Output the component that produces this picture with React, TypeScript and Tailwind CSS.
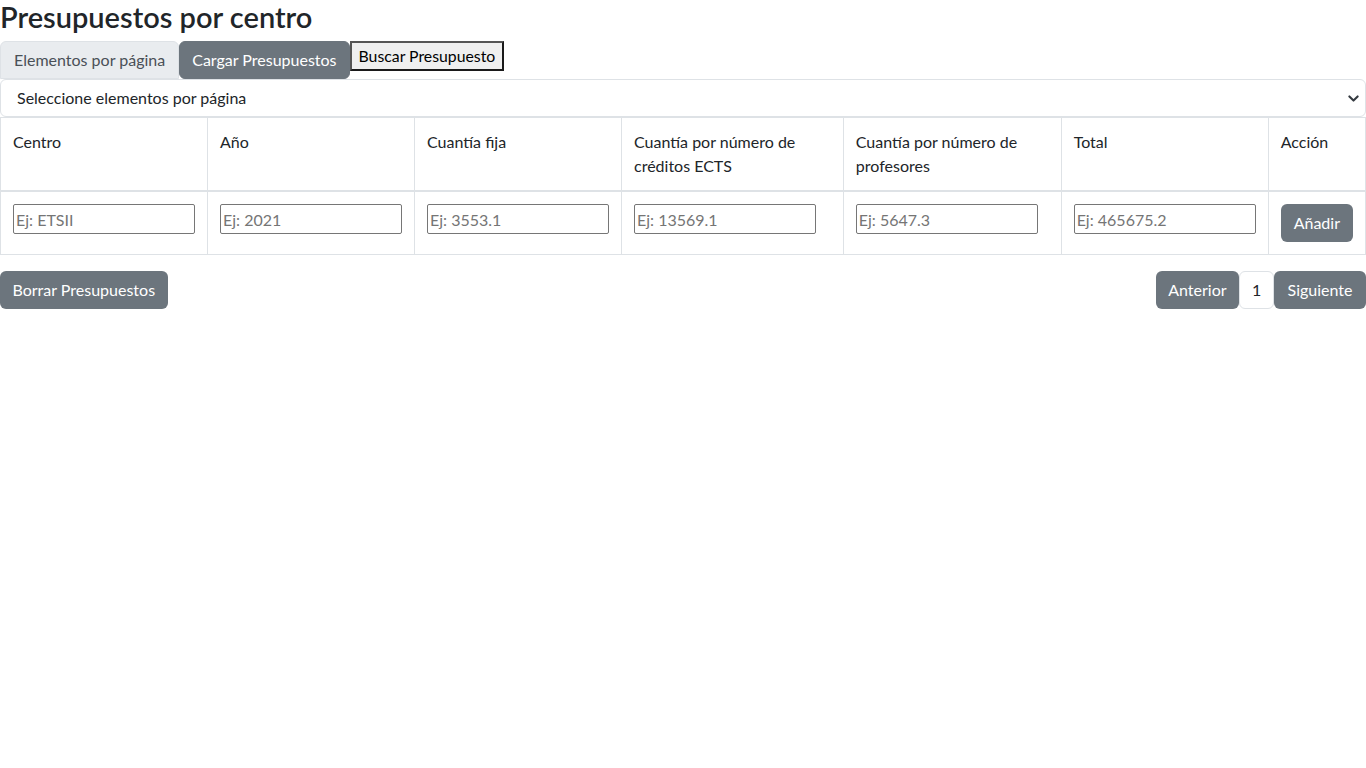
import React from "react";

const cols = [
  { label: "Centro", w: "w-[207px]", ph: "Ej: ETSII" },
  { label: "Año", w: "w-[207px]", ph: "Ej: 2021" },
  { label: "Cuantía fija", w: "w-[207px]", ph: "Ej: 3553.1" },
  { label: "Cuantía por número de créditos ECTS", w: "w-[222px]", ph: "Ej: 13569.1" },
  { label: "Cuantía por número de profesores", w: "w-[218px]", ph: "Ej: 5647.3" },
  { label: "Total", w: "w-[207px]", ph: "Ej: 465675.2" },
];

export default function App() {
  return (
    <div className="min-h-screen bg-white text-[#212529] text-base" style={{ fontFamily: "Lato, 'Noto Sans', sans-serif" }}>
      <h3 className="text-[29px] leading-[33px] font-semibold mb-2">Presupuestos por centro</h3>
      <div className="flex items-start">
        <button className="h-[38px] px-[13px] bg-[#e9ecef] text-[#495057] border border-[#dee2e6] rounded-t-md">
          Elementos por página
        </button>
        <button className="h-[38px] px-3 bg-[#6c757d] text-white border border-[#6c757d] rounded-md">
          Cargar Presupuestos
        </button>
        <button className="h-[30px] px-[7px] bg-[#efefef] text-black text-[15.8px] border-2 border-[#1a1a1a] border-t-[#555] border-l-[#555]">
          Buscar Presupuesto
        </button>
      </div>
      <div className="relative">
        <select className="w-full h-[38px] appearance-none pl-4 pr-9 border border-[#dee2e6] rounded-md text-[#212529] bg-white">
          <option>Seleccione elementos por página</option>
        </select>
        <svg className="absolute right-[7px] top-[16px] pointer-events-none" width="11" height="7" viewBox="0 0 16 10">
          <path d="M2 2l6 6 6-6" fill="none" stroke="#343a40" strokeWidth="3" strokeLinecap="round" strokeLinejoin="round" />
        </svg>
      </div>
      <table className="border-collapse w-full">
        <thead>
          <tr className="border-b-2 border-[#dee2e6]">
            {cols.map((c) => (
              <th key={c.label} className={`${c.w} border border-[#dee2e6] p-3 text-left font-normal align-top leading-6`}>
                {c.label}
              </th>
            ))}
            <th className="border border-[#dee2e6] p-3 text-left font-normal align-top leading-6">Acción</th>
          </tr>
        </thead>
        <tbody>
          <tr>
            {cols.map((c) => (
              <td key={c.label} className="border border-[#dee2e6] px-3 py-3 align-top">
                <input
                  placeholder={c.ph}
                  className="w-[182px] h-[30px] border border-[#767676] rounded-[2px] px-[2px] placeholder-[#757575] text-base"
                />
              </td>
            ))}
            <td className="border border-[#dee2e6] px-3 py-3 align-top">
              <button className="h-[38px] px-[13px] bg-[#6c757d] text-white rounded-md">Añadir</button>
            </td>
          </tr>
        </tbody>
      </table>
      <div className="flex justify-between items-center mt-4">
        <button className="h-[38px] px-[12.5px] bg-[#6c757d] text-white rounded-md">Borrar Presupuestos</button>
        <div className="flex items-center">
          <button className="h-[38px] px-[12.5px] bg-[#6c757d] text-white rounded-md">Anterior</button>
          <span className="h-[38px] w-[35px] flex items-center justify-center border border-[#dee2e6] rounded-md bg-white">1</span>
          <button className="h-[38px] px-[13.5px] bg-[#6c757d] text-white rounded-md">Siguiente</button>
        </div>
      </div>
    </div>
  );
}
